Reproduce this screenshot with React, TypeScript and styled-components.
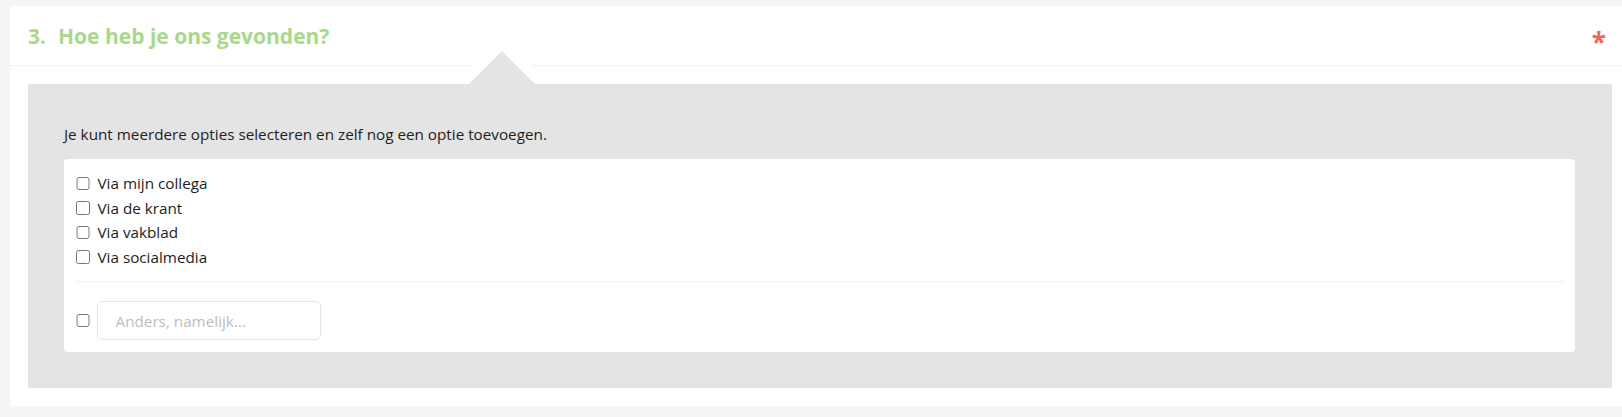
import React from "react";
import styled, { createGlobalStyle } from "styled-components";

const GlobalStyle = createGlobalStyle`
  html, body {
    margin: 0;
    padding: 0;
    background: #f5f5f5;
    overflow: hidden;
  }
  body {
    font-family: "Open Sans", "Liberation Sans", sans-serif;
    color: #222;
  }
`;

const Page = styled.div`
  padding: 6px 0 0 10px;
`;

const Card = styled.section`
  width: 1620px;
  background: #fff;
  padding-bottom: 18px;
`;

const Header = styled.header`
  height: 59px;
  display: flex;
  align-items: center;
  justify-content: space-between;
  padding: 0 24px 0 18px;
  border-bottom: 1px solid #eef0f5;
`;

const Title = styled.h2`
  margin: 0;
  display: flex;
  align-items: baseline;
  font-size: 21px;
  font-weight: 700;
  color: #a9d88b;
  line-height: 1;
  padding-top: 2px;
`;

const Number = styled.span`
  margin-right: 12px;
`;

const Required = styled.span`
  color: #ff5c5c;
  font-size: 26px;
  font-weight: 700;
  line-height: 1;
  padding-top: 12px;
`;

const Panel = styled.div`
  position: relative;
  margin: 18px 18px 0;
  background: #e4e4e4;
  padding: 40px 37px 36px 36px;

  &::before,
  &::after {
    content: "";
    position: absolute;
    width: 0;
    height: 0;
    border-style: solid;
  }

  /* white rim that cuts the header rule around the pointer */
  &::before {
    left: 426px;
    top: -48px;
    border-width: 0 48px 48px 48px;
    border-color: transparent transparent #fff transparent;
  }

  &::after {
    left: 441px;
    top: -33px;
    border-width: 0 33px 33px 33px;
    border-color: transparent transparent #e4e4e4 transparent;
  }
`;

const Hint = styled.p`
  margin: 0 0 15px;
  font-size: 15.25px;
  line-height: 20px;
  color: #1e1e1e;
`;

const OptionsBox = styled.div`
  background: #fff;
  border-radius: 4px;
  padding: 12px 11px 12px 12px;
`;

const OptionList = styled.div`
  display: flex;
  flex-direction: column;
`;

const Option = styled.label`
  display: flex;
  align-items: center;
  gap: 8px;
  height: 24.5px;
  font-size: 15.25px;
  color: #1e1e1e;
  cursor: pointer;
`;

const Check = styled.input.attrs({ type: "checkbox" })`
  width: 13.5px;
  height: 13.5px;
  margin: 0;
  flex: none;
`;

const Rule = styled.hr`
  border: 0;
  border-top: 1px solid #f0f0f2;
  margin: 12px 0 19px;
`;

const OtherRow = styled.div`
  display: flex;
  align-items: center;
  gap: 7px;
`;

const OtherInput = styled.input`
  box-sizing: border-box;
  width: 224px;
  height: 39px;
  border: 1px solid #e6e6e6;
  border-radius: 5px;
  padding: 0 12px 0 18px;
  font-family: "Open Sans", "Liberation Sans", sans-serif;
  font-size: 15.25px;
  color: #222;
  outline: none;

  &::placeholder {
    color: #bdbdbd;
  }
`;

const options = ["Via mijn collega", "Via de krant", "Via vakblad", "Via socialmedia"];

export default function App() {
  return (
    <>
      <GlobalStyle />
      <Page>
        <Card>
          <Header>
            <Title>
              <Number>3.</Number>
              Hoe heb je ons gevonden?
            </Title>
            <Required>*</Required>
          </Header>
          <Panel>
            <Hint>Je kunt meerdere opties selecteren en zelf nog een optie toevoegen.</Hint>
            <OptionsBox>
              <OptionList>
                {options.map((o) => (
                  <Option key={o}>
                    <Check />
                    {o}
                  </Option>
                ))}
              </OptionList>
              <Rule />
              <OtherRow>
                <Check />
                <OtherInput placeholder="Anders, namelijk..." />
              </OtherRow>
            </OptionsBox>
          </Panel>
        </Card>
      </Page>
    </>
  );
}
